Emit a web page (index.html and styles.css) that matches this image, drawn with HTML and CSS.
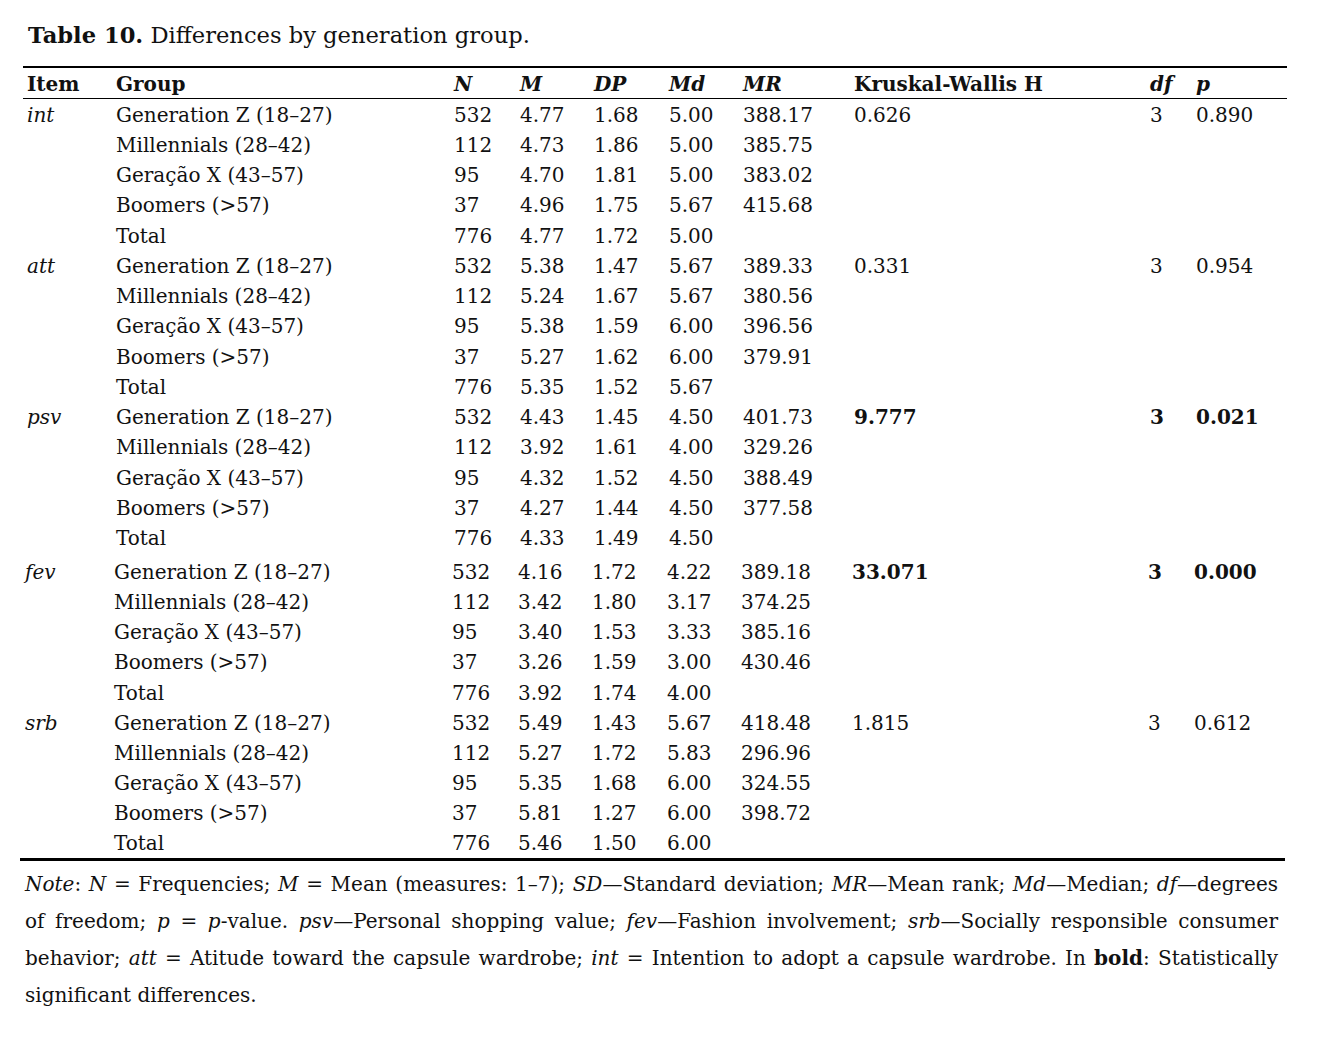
FILE: index.html
```html
<!DOCTYPE html>
<html lang="en">
<head>
<meta charset="utf-8">
<title>Table 10</title>
<link rel="stylesheet" href="styles.css">
</head>
<body>
<div class="page">
  <p class="caption"><b>Table 10.</b> Differences by generation group.</p>
  <div class="table">
    <div class="part top">
      <div class="row head">
        <span>Item</span><span>Group</span><span><i>N</i></span><span><i>M</i></span><span><i>DP</i></span><span><i>Md</i></span><span><i>MR</i></span><span>Kruskal-Wallis H</span><span><i>df</i></span><span><i>p</i></span>
      </div>
      <div class="row"><span><i>int</i></span><span>Generation Z (18–27)</span><span>532</span><span>4.77</span><span>1.68</span><span>5.00</span><span>388.17</span><span>0.626</span><span>3</span><span>0.890</span></div>
      <div class="row"><span></span><span>Millennials (28–42)</span><span>112</span><span>4.73</span><span>1.86</span><span>5.00</span><span>385.75</span><span></span><span></span><span></span></div>
      <div class="row"><span></span><span>Geração X (43–57)</span><span>95</span><span>4.70</span><span>1.81</span><span>5.00</span><span>383.02</span><span></span><span></span><span></span></div>
      <div class="row"><span></span><span>Boomers (&gt;57)</span><span>37</span><span>4.96</span><span>1.75</span><span>5.67</span><span>415.68</span><span></span><span></span><span></span></div>
      <div class="row"><span></span><span>Total</span><span>776</span><span>4.77</span><span>1.72</span><span>5.00</span><span></span><span></span><span></span><span></span></div>
      <div class="row"><span><i>att</i></span><span>Generation Z (18–27)</span><span>532</span><span>5.38</span><span>1.47</span><span>5.67</span><span>389.33</span><span>0.331</span><span>3</span><span>0.954</span></div>
      <div class="row"><span></span><span>Millennials (28–42)</span><span>112</span><span>5.24</span><span>1.67</span><span>5.67</span><span>380.56</span><span></span><span></span><span></span></div>
      <div class="row"><span></span><span>Geração X (43–57)</span><span>95</span><span>5.38</span><span>1.59</span><span>6.00</span><span>396.56</span><span></span><span></span><span></span></div>
      <div class="row"><span></span><span>Boomers (&gt;57)</span><span>37</span><span>5.27</span><span>1.62</span><span>6.00</span><span>379.91</span><span></span><span></span><span></span></div>
      <div class="row"><span></span><span>Total</span><span>776</span><span>5.35</span><span>1.52</span><span>5.67</span><span></span><span></span><span></span><span></span></div>
      <div class="row"><span><i>psv</i></span><span>Generation Z (18–27)</span><span>532</span><span>4.43</span><span>1.45</span><span>4.50</span><span>401.73</span><span><b>9.777</b></span><span><b>3</b></span><span><b>0.021</b></span></div>
      <div class="row"><span></span><span>Millennials (28–42)</span><span>112</span><span>3.92</span><span>1.61</span><span>4.00</span><span>329.26</span><span></span><span></span><span></span></div>
      <div class="row"><span></span><span>Geração X (43–57)</span><span>95</span><span>4.32</span><span>1.52</span><span>4.50</span><span>388.49</span><span></span><span></span><span></span></div>
      <div class="row"><span></span><span>Boomers (&gt;57)</span><span>37</span><span>4.27</span><span>1.44</span><span>4.50</span><span>377.58</span><span></span><span></span><span></span></div>
      <div class="row"><span></span><span>Total</span><span>776</span><span>4.33</span><span>1.49</span><span>4.50</span><span></span><span></span><span></span><span></span></div>
    </div>
    <div class="part bottom">
      <div class="row"><span><i>fev</i></span><span>Generation Z (18–27)</span><span>532</span><span>4.16</span><span>1.72</span><span>4.22</span><span>389.18</span><span><b>33.071</b></span><span><b>3</b></span><span><b>0.000</b></span></div>
      <div class="row"><span></span><span>Millennials (28–42)</span><span>112</span><span>3.42</span><span>1.80</span><span>3.17</span><span>374.25</span><span></span><span></span><span></span></div>
      <div class="row"><span></span><span>Geração X (43–57)</span><span>95</span><span>3.40</span><span>1.53</span><span>3.33</span><span>385.16</span><span></span><span></span><span></span></div>
      <div class="row"><span></span><span>Boomers (&gt;57)</span><span>37</span><span>3.26</span><span>1.59</span><span>3.00</span><span>430.46</span><span></span><span></span><span></span></div>
      <div class="row"><span></span><span>Total</span><span>776</span><span>3.92</span><span>1.74</span><span>4.00</span><span></span><span></span><span></span><span></span></div>
      <div class="row"><span><i>srb</i></span><span>Generation Z (18–27)</span><span>532</span><span>5.49</span><span>1.43</span><span>5.67</span><span>418.48</span><span>1.815</span><span>3</span><span>0.612</span></div>
      <div class="row"><span></span><span>Millennials (28–42)</span><span>112</span><span>5.27</span><span>1.72</span><span>5.83</span><span>296.96</span><span></span><span></span><span></span></div>
      <div class="row"><span></span><span>Geração X (43–57)</span><span>95</span><span>5.35</span><span>1.68</span><span>6.00</span><span>324.55</span><span></span><span></span><span></span></div>
      <div class="row"><span></span><span>Boomers (&gt;57)</span><span>37</span><span>5.81</span><span>1.27</span><span>6.00</span><span>398.72</span><span></span><span></span><span></span></div>
      <div class="row"><span></span><span>Total</span><span>776</span><span>5.46</span><span>1.50</span><span>6.00</span><span></span><span></span><span></span><span></span></div>
    </div>
  </div>
  <p class="note"><i>Note</i>: <i>N</i> = Frequencies; <i>M</i> = Mean (measures: 1–7); <i>SD</i>—Standard deviation; <i>MR</i>—Mean rank; <i>Md</i>—Median; <i>df</i>—degrees of freedom; <i>p</i> = <i>p</i>-value. <i>psv</i>—Personal shopping value; <i>fev</i>—Fashion involvement; <i>srb</i>—Socially responsible consumer behavior; <i>att</i> = Atitude toward the capsule wardrobe; <i>int</i> = Intention to adopt a capsule wardrobe. In <b>bold</b>: Statistically significant differences.</p>
</div>
</body>
</html>
```
FILE: styles.css
```css
html, body {
  margin: 0;
  padding: 0;
  background: #ffffff;
}

body {
  font-family: "DejaVu Serif", serif;
  color: #111111;
  font-size: 20px;
}

.page {
  width: 1319px;
  padding-top: 18px;
}

.caption {
  margin: 0 0 0 28px;
  font-size: 22.6px;
  line-height: 34px;
  height: 48px;
}

.table {
  display: flex;
  flex-direction: column;
}

.part.top {
  margin-left: 23px;
  width: 1264px;
  border-top: 2.5px solid #000;
}

.part.bottom {
  margin-left: 20px;
  width: 1265px;
  margin-top: 3.5px;
  border-bottom: 3px solid #000;
}

.row {
  display: grid;
  grid-template-columns: 89px 338px 66px 74px 75px 74px 111px 296px 46px 1fr;
  height: 30.2px;
  line-height: 33px;
  white-space: nowrap;
}

.part.top .row {
  height: 30.25px;
  padding-left: 4px;
}

.part.bottom .row {
  padding-left: 5px;
}

.part.top .row.head {
  height: 29.5px;
  line-height: 32px;
  font-weight: bold;
  border-bottom: 1.5px solid #000;
}

.note {
  margin: 5px 0 0 25px;
  width: 1253px;
  font-size: 20px;
  line-height: 37px;
  text-align: justify;
}
```
